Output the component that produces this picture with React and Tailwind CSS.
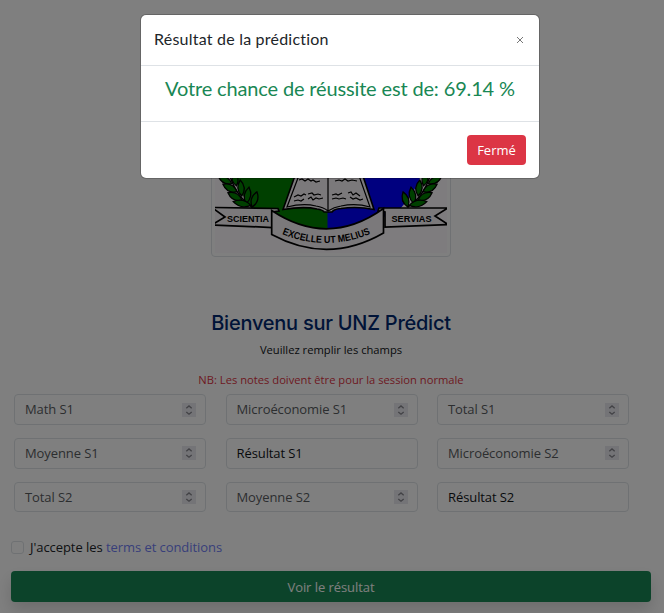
const leaves = [
  [225, 180, 7.5, 3, 28],
  [235, 179, 7, 3, 78],
  [230, 188, 8, 3.2, 28],
  [241, 188, 8, 3.2, 84],
  [235, 196.5, 8, 3.2, 28],
  [247.5, 195.5, 8.5, 3.2, 100],
  [242, 203.5, 9, 3.1, 12],
  [254.5, 199.5, 8, 3.1, 108],
];

function Laurel() {
  return (
    <g stroke="#000" strokeWidth="1.3" fill="#008000">
      <path d="M228 170Q235 196 252 207" fill="none" />
      {leaves.map(([x, y, rx, ry, a], i) => (
        <path
          key={i}
          d={`M${-rx} 0Q0 ${-ry * 2} ${rx} 0Q0 ${ry * 2} ${-rx} 0Z`}
          transform={`translate(${x} ${y}) rotate(${a})`}
        />
      ))}
    </g>
  );
}

function Emblem() {
  return (
    <svg viewBox="215 19 232 234" className="h-[234px] w-[232px] bg-[#fcf8fc]">
      <path d="M225 60H328V232Q290 228 251 208Q238 190 232 170Z" fill="#008000" />
      <path d="M431 60H327.5V232Q366 228 400 209Q416 192 423 170Z" fill="#0000ff" />
      <Laurel />
      <g transform="translate(660 0) scale(-1 1)">
        <Laurel />
      </g>
      <path d="M297 170L283 209.500Q304 206 317 209Q323 210 324 212H332Q334 209 341 208.500Q357 206 374 209.500L361 170Z" fill="#f7f3f7" stroke="#000" strokeWidth="1.600" />
      <path d="M301 170L287 207Q303 203 316 206Q323 207 328 211Q334 207 341 206Q356 203 370 207L357 170M328 170V211" fill="none" stroke="#000" strokeWidth="1.200" />
      <path d="M299 180l3 -1 3 2 3 -2 3 2 2-1 3 2 4-1M335 181l4-1 3 1 3-2 3 2 4-1 5 1M294 197l4-2 3 1 3-2 2 1M308 194l4-1 2 2 4-1 3 1M294 201l4-1 3 1 3-2M308 199l3-2 2 3 3-2 3 1 4-1M332 195l4-1 2 1 4-2M348 193l3-1 2 3 3-2 4 3M332 199l4-1 3 1 4-1 3 1M350 197l3 2 3-1 4 2 3-1" fill="none" stroke="#000" strokeWidth="1.200" />
      <g fill="#f7f3f7" stroke="#000" strokeWidth="1.700">
        <path d="M214 207.500L278 208.500L279 211L272 212V227.500L214 225M214 209L225 217L214 223.500" />
        <path d="M448 208H379L378 211L385 212V227L448 224.500L435 216Z" />
        <path d="M271.700 210.500Q328 248 383.500 208.500V233Q328 265 271.700 234.500Z" />
      </g>
      <g className="font-['Liberation_Sans',sans-serif] font-bold" fontSize="9.500" fill="#000">
        <text x="227" y="222" textLength="42" lengthAdjust="spacingAndGlyphs">SCIENTIA</text>
        <text x="391.500" y="222" textLength="40" lengthAdjust="spacingAndGlyphs">SERVIAS</text>
        <path id="motto" d="M282 234Q328 253 375 232" fill="none" />
        <text textLength="91" lengthAdjust="spacingAndGlyphs" fontSize="10">
          <textPath href="#motto">EXCELLE UT MELIUS</textPath>
        </text>
      </g>
    </svg>
  );
}

const fields = [
  ["Math S1", true],
  ["Microéconomie S1", true],
  ["Total S1", true],
  ["Moyenne S1", true],
  ["Résultat S1", false],
  ["Microéconomie S2", true],
  ["Total S2", true],
  ["Moyenne S2", true],
  ["Résultat S2", false],
];

function Field({ label, numeric }) {
  return (
    <div className="flex h-[30.8px] w-[192px] items-center justify-between rounded border border-[#dee2e6] pr-[9px] pl-2.5">
      <span className={numeric ? "pt-px tracking-[-0.09px] text-[#595c5f]" : "pt-px tracking-[-0.09px] text-[#111418]"}>
        {label}
      </span>
      {numeric && (
        <span className="flex h-3.5 w-3.5 items-center justify-center bg-[#e8e8ee]">
          <svg viewBox="0 0 14 14" className="h-3.5 w-3.5" fill="none" stroke="#85858c" strokeWidth="1.300">
            <path d="M4.300 5.200L7 2.900L9.700 5.200M4.300 8.900L7 11.200L9.700 8.900" />
          </svg>
        </span>
      )}
    </div>
  );
}

export default function App() {
  return (
    <div className="relative h-[613px] w-[664px] overflow-hidden bg-white font-['Open_Sans',sans-serif] text-[13px] text-[#212529]">
      <main className="flex flex-col pt-[15px]">
        <div className="ml-[211px] flex h-[242px] w-[240px] items-center justify-center rounded border border-[#dee2e6]">
          <Emblem />
        </div>
        <h1 className="mt-[51px] pr-0.5 text-center font-['Inter',sans-serif] text-[20px] leading-[30px] font-medium tracking-[-0.25px] text-[#012970]">
          Bienvenu sur UNZ Prédict
        </h1>
        <p className="mt-1 pr-0.5 text-center text-[11.2px] leading-4 text-[#111418]">Veuillez remplir les champs</p>
        <p className="mt-3.5 pr-0.5 text-center text-[11.2px] leading-4 text-[#dc3545]">
          NB: Les notes doivent être pour la session normale
        </p>
        <div className="mt-[6.200px] ml-3.5 grid w-[615px] grid-cols-3 gap-x-[19.500px] gap-y-[12.900px]">
          {fields.map(([label, numeric]) => (
            <Field key={label} label={label} numeric={numeric} />
          ))}
        </div>
        <div className="mt-[25.600px] ml-[11px] flex h-5 items-center gap-1.5">
          <span className="h-[13px] w-[13px] rounded-[3px] border border-[#dee2e6]" />
          <span className="tracking-[-0.06px]">
            J'accepte les <span className="text-[#717ff5]">terms et conditions</span>
          </span>
        </div>
        <button className="mt-[13.5px] ml-[11px] h-[31px] w-[640px] rounded bg-[#198754] pt-px tracking-[-0.06px] text-white shadow-[0_8px_16px_rgba(0,0,0,0.15)]">
          Voir le résultat
        </button>
      </main>
      <div className="absolute inset-0 bg-black/50" />
      <section className="absolute top-3.5 left-[140px] flex h-[165px] w-[400px] flex-col rounded-md border border-black/20 bg-white bg-clip-padding">
        <header className="flex h-[51px] items-center justify-between border-b border-[#dee2e6] pr-[15px] pl-[13px]">
          <h2 className="pb-0.5 font-['Lato',sans-serif] text-[16px] tracking-[0.22px]">Résultat de la prédiction</h2>
          <svg viewBox="0 0 8 8" className="h-2 w-2" stroke="#777" strokeWidth="1">
            <path d="M1 1L7 7M7 1L1 7" />
          </svg>
        </header>
        <p className="flex h-14 justify-center border-b border-[#dee2e6] pt-[7px] font-['Lato',sans-serif] text-[20px] leading-[30px] tracking-[-0.15px] text-[#198754]">
          Votre chance de réussite est de: 69.14 %
        </p>
        <footer className="flex justify-end pt-[13px] pr-[13px]">
          <button className="h-[30px] w-[59px] rounded bg-[#dc3545] pt-px text-white">Fermé</button>
        </footer>
      </section>
    </div>
  );
}
